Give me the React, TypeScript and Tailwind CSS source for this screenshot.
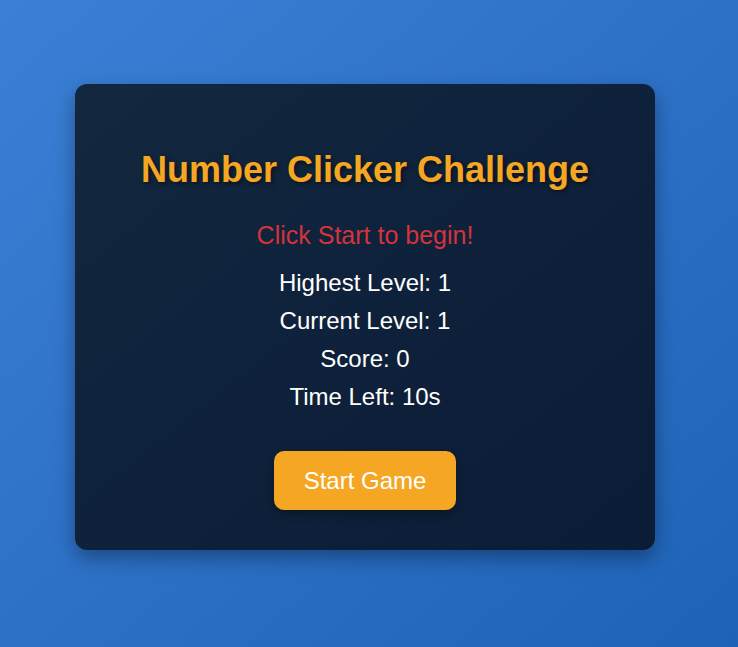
export default function App() {
	const stats = [
		"Highest Level: 1",
		"Current Level: 1",
		"Score: 0",
		"Time Left: 10s",
	];
	return (
		<div className="min-h-screen h-[647px] w-full flex items-center justify-center pr-2 pb-[13px] bg-gradient-to-br from-[#3b80d6] to-[#1e62b7] font-['Liberation_Sans',Arial,sans-serif]">
			<div className="w-[580px] h-[466px] rounded-[12px] bg-gradient-to-br from-[#13273f] to-[#0b1c36] shadow-[0_8px_20px_rgba(0,0,0,0.35)] px-10 pt-10 pb-10 flex flex-col items-center text-center">
				<h1 className="mt-[25px] text-[36px] leading-[41px] font-bold text-[#f5a623] [text-shadow:2px_2px_4px_rgba(0,0,0,0.5)]">
					Number Clicker Challenge
				</h1>
				<p className="mt-[31px] text-[25px] leading-[29px] text-[#d3333b]">
					Click Start to begin!
				</p>
				<div className="mt-[14px] flex flex-col items-center text-white text-[24px]">
					{stats.map((s) => (
						<div key={s} className="h-[38px] leading-[38px]">
							{s}
						</div>
					))}
				</div>
				<button className="mt-[35px] w-[182px] h-[60px] rounded-[10px] bg-[#f5a623] text-white text-[24px] shadow-[0_4px_10px_rgba(0,0,0,0.3)]">
					Start Game
				</button>
			</div>
		</div>
	);
}
